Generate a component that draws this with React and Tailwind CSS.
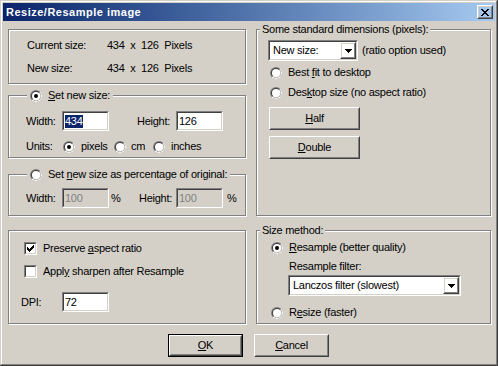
import React from 'react';

function Radio({ checked }) {
  return (
    <svg width="12" height="12" viewBox="0 0 12 12" className="shrink-0">
      <defs>
        <clipPath id="radio-br">
          <polygon points="12,0 12,12 0,12" />
        </clipPath>
      </defs>
      <circle cx="6" cy="6" r="6" fill="#808080" />
      <circle cx="6" cy="6" r="6" fill="#ffffff" clipPath="url(#radio-br)" />
      <circle cx="6" cy="6" r="5" fill="#404040" />
      <circle cx="6" cy="6" r="5" fill="#d4d0c8" clipPath="url(#radio-br)" />
      <circle cx="6" cy="6" r="4" fill="#ffffff" />
      {checked && <circle cx="6" cy="6" r="2" fill="#000000" />}
    </svg>
  );
}

function Check({ checked }) {
  return (
    <div className="w-[13px] h-[13px] shrink-0 border border-t-[#808080] border-l-[#808080] border-r-white border-b-white">
      <div className="w-full h-full bg-white border border-t-[#404040] border-l-[#404040] border-r-[#d4d0c8] border-b-[#d4d0c8] flex items-center justify-center">
        {checked && (
          <svg width="7" height="7" viewBox="0 0 7 7" shapeRendering="crispEdges">
            <path
              d="M6 0h1v1h-1z M5 1h2v1h-2z M0 2h1v1h-1z M4 2h3v1h-3z M0 3h2v1h-2z M3 3h3v1h-3z M0 4h5v1h-5z M1 5h3v1h-3z M2 6h1v1h-1z"
              fill="#000"
            />
          </svg>
        )}
      </div>
    </div>
  );
}

function Field({ children, disabled }) {
  return (
    <div className="w-[47px] h-[20px] shrink-0 border border-t-[#808080] border-l-[#808080] border-r-white border-b-white">
      <div
        className={`h-full border border-t-[#404040] border-l-[#404040] border-r-[#d4d0c8] border-b-[#d4d0c8] flex items-center pl-[1px] ${
          disabled ? 'bg-[#d4d0c8] text-[#808080]' : 'bg-white'
        }`}
      >
        {children}
      </div>
    </div>
  );
}

function Raised({ children, className = '' }) {
  return (
    <div className={`border border-t-white border-l-white border-r-[#404040] border-b-[#404040] ${className}`}>
      <div className="w-full h-full border border-t-[#d4d0c8] border-l-[#d4d0c8] border-r-[#808080] border-b-[#808080] flex items-center justify-center">
        {children}
      </div>
    </div>
  );
}

function Arrow() {
  return (
    <svg width="7" height="4" viewBox="0 0 7 4" shapeRendering="crispEdges">
      <path d="M0 0h7v1H0z M1 1h5v1H1z M2 2h3v1H2z M3 3h1v1H3z" fill="#000" />
    </svg>
  );
}

function Select({ text, className = '' }) {
  return (
    <div className={`h-[21px] shrink-0 border border-t-[#808080] border-l-[#808080] border-r-white border-b-white ${className}`}>
      <div className="h-full bg-white border border-t-[#404040] border-l-[#404040] border-r-[#d4d0c8] border-b-[#d4d0c8] flex items-center">
        <span className="flex-1 pl-[3px] whitespace-nowrap">{text}</span>
        <Raised className="w-[16px] h-[17px]">
          <Arrow />
        </Raised>
      </div>
    </div>
  );
}

function Group({ legend, legendClass = '', className = '', children }) {
  return (
    <div className={`border border-[#808080] shadow-[1px_1px_0_#fff,inset_1px_1px_0_#fff] flex flex-col ${className}`}>
      {legend && (
        <div className={`-mt-[7px] h-[13px] self-start flex items-center bg-[#d4d0c8] whitespace-nowrap ${legendClass}`}>
          {legend}
        </div>
      )}
      {children}
    </div>
  );
}

export default function App() {
  return (
    <div className="w-[498px] h-[366px] bg-[#d4d0c8] p-[3px] flex flex-col text-black text-[11px] leading-[13px] tracking-[-0.25px] font-['Liberation_Sans',Arial,sans-serif] shadow-[inset_-1px_-1px_0_#404040,inset_1px_1px_0_#d4d0c8,inset_-2px_-2px_0_#808080,inset_2px_2px_0_#fff]">
      {/* Title bar */}
      <div className="h-[18px] shrink-0 flex items-center pl-[3px] pr-[2px] bg-gradient-to-r from-[#0a246a] to-[#a6caf0]">
        <span className="flex-1 text-white font-bold text-[11px] tracking-[0.5px]">Resize/Resample image</span>
        <Raised className="w-[16px] h-[14px]">
          <svg width="8" height="7" viewBox="0 0 8 7" shapeRendering="crispEdges">
            <path
              d="M0 0h2v1H0z M6 0h2v1H6z M1 1h2v1H1z M5 1h2v1H5z M2 2h4v1H2z M3 3h2v1H3z M2 4h4v1H2z M1 5h2v1H1z M5 5h2v1H5z M0 6h2v1H0z M6 6h2v1H6z"
              fill="#000"
            />
          </svg>
        </Raised>
      </div>

      <div className="flex-1 flex flex-col pt-[8px] pl-[5px] pr-[4px]">
        {/* Top row */}
        <div className="flex gap-[10px] h-[187px]">
          <div className="w-[238px] flex flex-col">
            <Group className="h-[55px] pt-[9px] pl-[18px]">
              <div className="flex h-[13px] items-center">
                <span className="w-[80px]">Current size:</span>
                <span className="whitespace-pre">434  x  126  Pixels</span>
              </div>
              <div className="flex h-[13px] items-center mt-[10px]">
                <span className="w-[80px]">New size:</span>
                <span className="whitespace-pre">434  x  126  Pixels</span>
              </div>
            </Group>

            <Group
              className="h-[63px] mt-[11px]"
              legendClass="ml-[18px] pl-[3px] pr-[3px]"
              legend={
                <>
                  <Radio checked />
                  <span className="ml-[6px]">
                    <u>S</u>et new size:
                  </span>
                </>
              }
            >
              <div className="flex h-[20px] items-center mt-[9px] pl-[17px]">
                <span className="w-[36px]">Width:</span>
                <Field>
                  <span className="bg-[#0a246a] text-white">434</span>
                </Field>
                <span className="w-[28px]" />
                <span className="w-[39px]">Height:</span>
                <Field>126</Field>
              </div>
              <div className="flex h-[13px] items-center mt-[9px] pl-[17px]">
                <span className="w-[37px]">Units:</span>
                <div className="w-[51px] flex items-center">
                  <Radio checked />
                  <span className="ml-[6px]">pixels</span>
                </div>
                <div className="w-[39px] flex items-center">
                  <Radio />
                  <span className="ml-[5px]">cm</span>
                </div>
                <div className="flex items-center">
                  <Radio />
                  <span className="ml-[6px]">inches</span>
                </div>
              </div>
            </Group>

            <Group
              className="h-[42px] mt-[16px]"
              legendClass="ml-[18px] pl-[3px] pr-[3px]"
              legend={
                <>
                  <Radio />
                  <span className="ml-[6px]">
                    Set <u>n</u>ew size as percentage of original:
                  </span>
                </>
              }
            >
              <div className="flex h-[20px] items-center mt-[7px] pl-[17px]">
                <span className="w-[36px]">Width:</span>
                <Field disabled>100</Field>
                <span className="w-[28px] ml-[2px]">%</span>
                <span className="w-[37px]">Height:</span>
                <Field disabled>100</Field>
                <span className="ml-[4px]">%</span>
              </div>
            </Group>
          </div>

          <Group
            className="w-[235px] h-[187px] pl-[11px]"
            legendClass="-ml-[8px] px-[2px]"
            legend={<span>Some standard dimensions (pixels):</span>}
          >
            <div className="flex items-center mt-[4px]">
              <Select text="New size:" className="w-[90px]" />
              <span className="ml-[4px]">(ratio option used)</span>
            </div>
            <div className="flex h-[13px] items-center mt-[5px] pl-[2px]">
              <Radio />
              <span className="ml-[6px]">
                Best <u>f</u>it to desktop
              </span>
            </div>
            <div className="flex h-[13px] items-center mt-[7px] pl-[2px]">
              <Radio />
              <span className="ml-[6px]">
                Des<u>k</u>top size (no aspect ratio)
              </span>
            </div>
            <Raised className="w-[91px] h-[23px] mt-[8px] ml-[1px]">
              <span>
                <u>H</u>alf
              </span>
            </Raised>
            <Raised className="w-[91px] h-[23px] mt-[6px] ml-[1px]">
              <span>
                <u>D</u>ouble
              </span>
            </Raised>
          </Group>
        </div>

        {/* Bottom row */}
        <div className="flex gap-[10px] h-[94px] mt-[14px]">
          <Group className="w-[238px] pt-[11px] pl-[12px]">
            <div className="flex h-[13px] items-center pl-[3px]">
              <Check checked />
              <span className="ml-[6px]">
                Preserve <u>a</u>spect ratio
              </span>
            </div>
            <div className="flex h-[13px] items-center mt-[10px] pl-[3px]">
              <Check />
              <span className="ml-[6px]">
                Appl<u>y</u> sharpen after Resample
              </span>
            </div>
            <div className="flex h-[20px] items-center mt-[14px]">
              <span className="w-[41px]">DPI:</span>
              <Field>72</Field>
            </div>
          </Group>

          <Group
            className="w-[235px] pl-[14px]"
            legendClass="-ml-[11px] px-[2px]"
            legend={<span>Size method:</span>}
          >
            <div className="flex h-[13px] items-center mt-[4px]">
              <Radio checked />
              <span className="ml-[6px]">
                <u>R</u>esample (better quality)
              </span>
            </div>
            <div className="h-[13px] mt-[6px] ml-[18px]">Resample filter:</div>
            <Select text="Lanczos filter (slowest)" className="w-[173px] mt-[2px] ml-[17px]" />
            <div className="flex h-[13px] items-center mt-[10px]">
              <Radio />
              <span className="ml-[6px]">
                R<u>e</u>size (faster)
              </span>
            </div>
          </Group>
        </div>

        {/* Buttons */}
        <div className="flex gap-[11px] mt-[10px] pl-[160px]">
          <div className="w-[75px] h-[23px] border border-black">
            <Raised className="w-full h-full">
              <span>
                <u>O</u>K
              </span>
            </Raised>
          </div>
          <Raised className="w-[75px] h-[23px]">
            <span>
              <u>C</u>ancel
            </span>
          </Raised>
        </div>
      </div>
    </div>
  );
}
